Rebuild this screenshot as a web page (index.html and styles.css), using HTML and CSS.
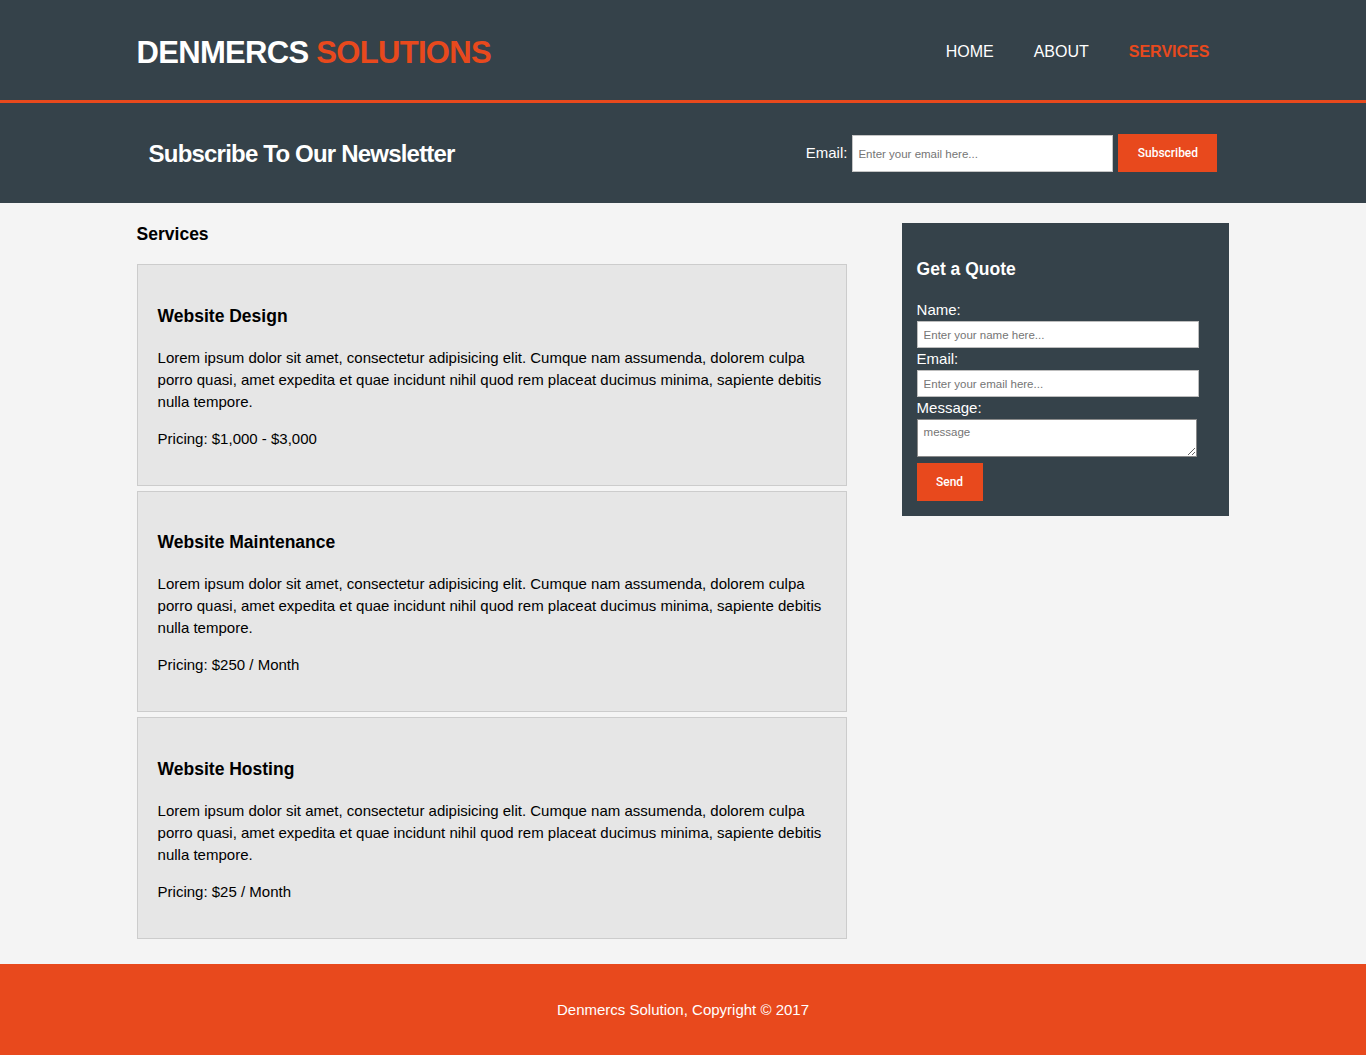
FILE: index.html
```html
<!DOCTYPE html>
<html lang="en">
<head>
<meta charset="utf-8">
<title>Denmercs Solutions | Services</title>
<link rel="stylesheet" href="styles.css">
</head>
<body>
  <header class="site-header">
    <div class="container header-inner">
      <div class="branding">
        <h1 class="logo"><span class="logo-main">DENMERCS</span> <span class="highlight">SOLUTIONS</span></h1>
      </div>
      <nav class="main-nav">
        <ul class="nav-list">
          <li class="nav-item"><a class="nav-link" href="#">Home</a></li>
          <li class="nav-item"><a class="nav-link" href="#">About</a></li>
          <li class="nav-item current"><a class="nav-link" href="#">Services</a></li>
        </ul>
      </nav>
    </div>
  </header>

  <section class="newsletter">
    <div class="container newsletter-inner">
      <h1 class="newsletter-title">Subscribe To Our Newsletter</h1>
      <form class="newsletter-form">
        <label class="newsletter-label">Email:</label>
        <input class="newsletter-input" type="email" placeholder="Enter your email here...">
        <button class="button-1 subscribe-btn" type="button">Subscribed</button>
      </form>
    </div>
  </section>

  <section class="main">
    <div class="container main-inner">
      <article class="main-col">
        <h1 class="page-title">Services</h1>
        <ul class="services">
          <li class="service">
            <h3 class="service-title">Website Design</h3>
            <p class="service-text">Lorem ipsum dolor sit amet, consectetur adipisicing elit. Cumque nam assumenda, dolorem culpa porro quasi, amet expedita et quae incidunt nihil quod rem placeat ducimus minima, sapiente debitis nulla tempore.</p>
            <p class="service-text">Pricing: $1,000 - $3,000</p>
          </li>
          <li class="service">
            <h3 class="service-title">Website Maintenance</h3>
            <p class="service-text">Lorem ipsum dolor sit amet, consectetur adipisicing elit. Cumque nam assumenda, dolorem culpa porro quasi, amet expedita et quae incidunt nihil quod rem placeat ducimus minima, sapiente debitis nulla tempore.</p>
            <p class="service-text">Pricing: $250 / Month</p>
          </li>
          <li class="service">
            <h3 class="service-title">Website Hosting</h3>
            <p class="service-text">Lorem ipsum dolor sit amet, consectetur adipisicing elit. Cumque nam assumenda, dolorem culpa porro quasi, amet expedita et quae incidunt nihil quod rem placeat ducimus minima, sapiente debitis nulla tempore.</p>
            <p class="service-text">Pricing: $25 / Month</p>
          </li>
        </ul>
      </article>

      <aside class="sidebar">
        <div class="dark">
          <h3 class="quote-title">Get a Quote</h3>
          <form class="quote">
            <div class="field">
              <label class="field-label">Name:</label>
              <input class="field-input" type="text" placeholder="Enter your name here...">
            </div>
            <div class="field">
              <label class="field-label">Email:</label>
              <input class="field-input" type="email" placeholder="Enter your email here...">
            </div>
            <div class="field">
              <label class="field-label">Message:</label>
              <textarea class="field-textarea" placeholder="message"></textarea>
            </div>
            <button class="button-1 send-btn" type="button">Send</button>
          </form>
        </div>
      </aside>
    </div>
  </section>

  <footer class="site-footer">
    <p class="footer-text">Denmercs Solution, Copyright &copy; 2017</p>
  </footer>
</body>
</html>
```

FILE: styles.css
```css
* { box-sizing: content-box; }

body {
  margin: 0;
  padding: 0;
  font-family: "Liberation Sans", Arial, Helvetica, sans-serif;
  font-size: 15px;
  line-height: 22px;
  background-color: #f4f4f4;
  color: #000;
}

.container {
  width: 80%;
  margin: 0 auto;
}

/* Header */
.site-header {
  background: #35424a;
  color: #fff;
  height: 100px;
  border-bottom: 3px solid #e8491d;
}

.header-inner {
  height: 100%;
  display: flex;
  justify-content: space-between;
  align-items: center;
}

.logo {
  margin: 0;
  font-size: 31px;
  line-height: 40px;
  font-weight: bold;
  letter-spacing: -0.7px;
  padding-top: 6px;
}

.highlight { color: #e8491d; }

.nav-list {
  display: flex;
  margin: 0;
  padding: 0;
  list-style: none;
}

.nav-item { padding: 0 20px; }

.nav-link {
  color: #fff;
  text-decoration: none;
  text-transform: uppercase;
  font-size: 16px;
  line-height: 22px;
  display: block;
  padding-top: 4px;
}

.current .nav-link {
  color: #e8491d;
  font-weight: bold;
}

/* Newsletter */
.newsletter {
  background: #35424a;
  color: #fff;
  height: 100px;
  padding: 0 15px;
}

.newsletter-inner {
  height: 100%;
  display: flex;
  justify-content: space-between;
  align-items: center;
}

.newsletter-title {
  margin: 0;
  font-size: 24px;
  line-height: 30px;
  letter-spacing: -0.8px;
  font-weight: bold;
  padding-top: 1px;
}

.newsletter-form {
  display: flex;
  align-items: center;
}

.newsletter-label {
  font-size: 15px;
  margin-right: 5px;
}

.newsletter-input {
  width: 249px;
  height: 25px;
  padding: 5px;
  border: 1px solid #c5c5c5;
  background: #fff;
  font-family: "Liberation Sans", Arial, sans-serif;
  font-size: 11.5px;
  margin: 1px 5px 0 0;
  outline: none;
}

.newsletter-input::placeholder,
.field-input::placeholder,
.field-textarea::placeholder {
  color: #757575;
}

.button-1 {
  height: 38px;
  background: #e8491d;
  border: 0;
  padding: 0 20px;
  color: #fff;
  font-family: Roboto, "Liberation Sans", Arial, sans-serif;
  font-size: 12px;
  font-weight: 500;
  cursor: pointer;
}

.subscribe-btn { width: 99px; padding: 0; }

/* Main */
.main-inner {
  display: flex;
  justify-content: space-between;
  align-items: flex-start;
}

.main-col { width: 65%; }

.page-title {
  margin: 16.5px 0;
  font-size: 17.5px;
  line-height: 28px;
  font-weight: bold;
}

.services {
  list-style: none;
  margin: 0;
  padding: 0;
}

.service {
  padding: 20px;
  border: 1px solid #cccccc;
  margin-bottom: 5px;
  background: #e6e6e6;
}

.service-title {
  margin: 16.5px 0 17px;
  font-size: 17.5px;
  line-height: 28px;
  font-weight: bold;
}

.service-text {
  margin: 15px 0;
}

.service-text:first-of-type { margin-top: 0; }

/* Sidebar */
.sidebar {
  width: 30%;
  margin-top: 10px;
}

.dark {
  padding: 15px;
  background: #35424a;
  color: #fff;
  margin: 10px 0;
}

.quote-title {
  margin: 16.5px 0;
  font-size: 17.5px;
  line-height: 28px;
  font-weight: bold;
}

.quote { margin: 0; }

.field-label {
  display: block;
  font-size: 15px;
  line-height: 22px;
}

.field-input {
  display: block;
  width: 268px;
  height: 15px;
  padding: 5px 6px;
  border: 1px solid #bdbdbd;
  background: #fff;
  font-family: "Liberation Sans", Arial, sans-serif;
  font-size: 11.5px;
  outline: none;
}

.field-textarea {
  display: block;
  width: 266px;
  height: 26px;
  padding: 5px 6px;
  border: 1px solid #8a8a8a;
  background: #fff;
  font-family: "Liberation Sans", Arial, sans-serif;
  font-size: 11.5px;
  line-height: 14px;
  margin: 0 0 6px;
  resize: both;
  outline: none;
}

.send-btn { display: block; width: 66px; padding: 0; }

/* Footer */
.site-footer {
  padding: 20px;
  margin-top: 20px;
  color: #fff;
  background-color: #e8491d;
  text-align: center;
}

.footer-text { margin: 15px 0; }
```
